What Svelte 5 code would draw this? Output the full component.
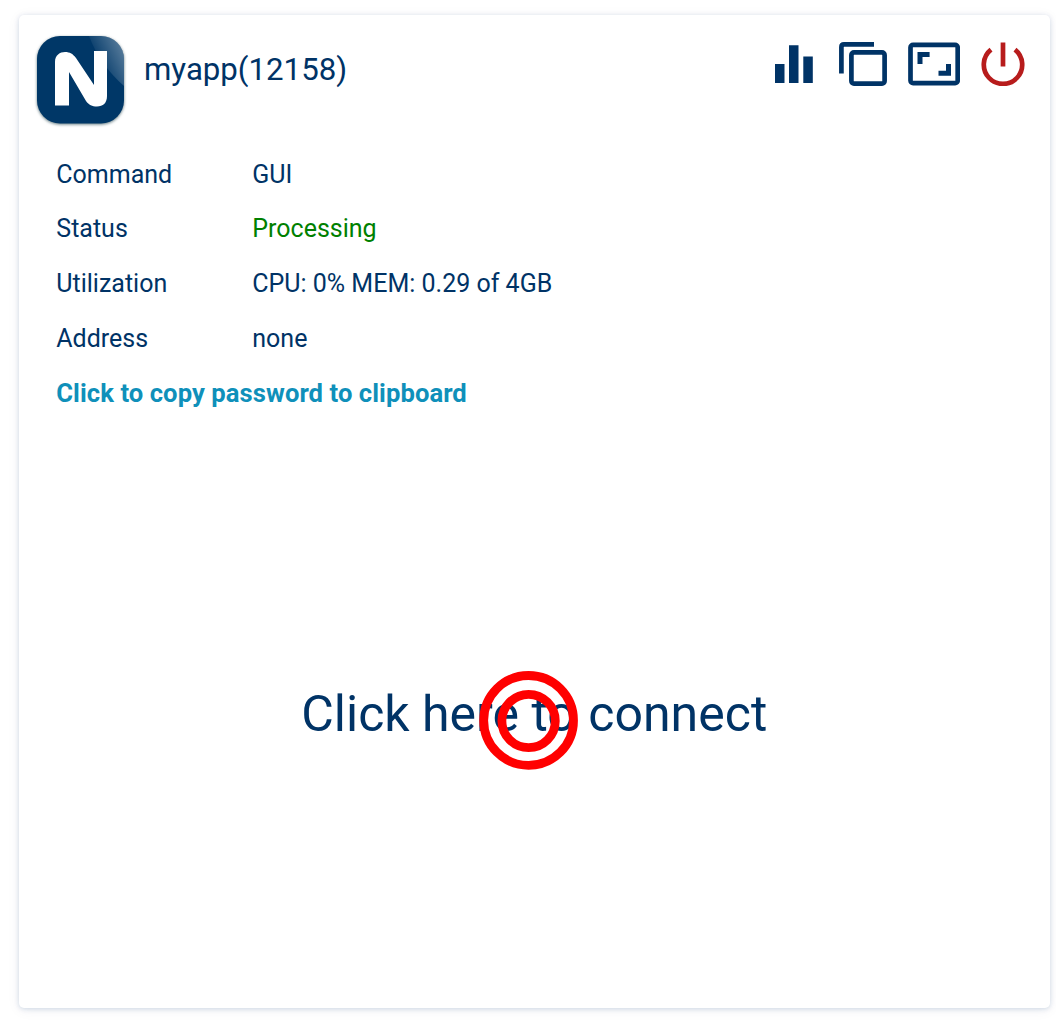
<script>
  const rows = [
    { label: 'Command', value: 'GUI' },
    { label: 'Status', value: 'Processing', ok: true },
    { label: 'Utilization', value: 'CPU: 0% MEM: 0.29 of 4GB' },
    { label: 'Address', value: 'none' }
  ];
</script>

<main class="page">
  <section class="card">
    <header>
      <svg class="logo" width="88" height="88" viewBox="0 0 88 88" aria-hidden="true">
        <defs>
          <linearGradient id="shine" x1="0.95" y1="0.1" x2="0.2" y2="0.6">
            <stop offset="0" stop-color="#fff" stop-opacity="0.36" />
            <stop offset="1" stop-color="#fff" stop-opacity="0" />
          </linearGradient>
          <clipPath id="tile"><rect width="87" height="87.5" rx="23" /></clipPath>
        </defs>
        <rect width="87" height="87.5" rx="23" fill="#003767" />
        <path clip-path="url(#tile)" d="M52 0Q63 29 87 50V0Z" fill="url(#shine)" />
        <path d="M18 69.500V26C18 19 23 16 28 16C33 16 36 18 39 22L57 49V15H70V60C70 67 66 70.500 60 70.500C55 70.500 52 69 49 65L32 36V69.500Z" fill="#fff" />
      </svg>
      <h1>myapp(12158)</h1>
      <nav>
        <svg width="38" height="44" viewBox="0 0 38 44" fill="#036"><path d="M0 22h9.500v19H0zM14 3.200h9.500V41H14zM28.300 14.500h9.500V41h-9.500z" /></svg>
        <svg class="copy" width="48" height="44" viewBox="0 0 48 44" fill="none" stroke="#036" stroke-width="4.700">
          <path d="M2.400 31.500V5Q2.400 2.400 5 2.400H35" />
          <rect x="12.400" y="10.400" width="33.200" height="31.200" rx="2.600" />
        </svg>
        <svg class="aspect" width="52" height="44" viewBox="0 0 52 44" fill="none" stroke="#036" stroke-width="4.700">
          <rect x="2.500" y="2.900" width="47.200" height="38.200" rx="2.600" />
          <path d="M12 22V12.400H21.600M30.500 31.200H40.500V22" stroke-width="5" />
        </svg>
        <svg class="power" width="44" height="44" viewBox="0 0 44 44" fill="none" stroke="#b71c1c" stroke-width="4.700">
          <path d="M22 .5V24.500M10 7.700A19.200 19.200 0 1 0 34 7.700" />
        </svg>
      </nav>
    </header>
    <dl>
      {#each rows as row}
        <div class="row">
          <dt>{row.label}</dt>
          <dd class:ok={row.ok}>{row.value}</dd>
        </div>
      {/each}
    </dl>
    <button class="copy-password">Click to copy password to clipboard</button>
    <button class="connect">
      <span>Click here to connect</span>
      <svg class="target" width="100" height="100" viewBox="0 0 100 100" fill="none" stroke="#f00" stroke-width="8.800">
        <circle cx="49.600" cy="49.400" r="44.900" /><circle cx="49.600" cy="50" r="26.700" />
      </svg>
    </button>
  </section>
</main>

<style>
  :global(body) { background: #fff; }
  .page {
    box-sizing: border-box;
    width: 1056px;
    height: 1025px;
    padding: 15px 6px 17px 18.500px;
    overflow: hidden;
    font-family: Roboto, "Liberation Sans", sans-serif;
    color: #036;
  }
  .card {
    box-sizing: border-box;
    display: flex;
    flex-direction: column;
    height: 993px;
    border-radius: 5px;
    background: #fff;
    box-shadow: 0 1px 5px rgba(0, 51, 120, 0.17), 0 2px 14px rgba(0, 51, 102, 0.06);
  }
  header {
    display: flex;
    align-items: flex-start;
    height: 131.700px;
    padding: 20.500px 25.400px 0 18.500px;
    box-sizing: border-box;
  }
  .logo { overflow: visible; filter: drop-shadow(0.500px 1px 1.500px rgba(0, 40, 50, 0.6)); }
  h1 {
    margin: 15px 0 0 19px;
    font-size: 31.200px;
    line-height: 38px;
    font-weight: 400;
  }
  nav { display: flex; margin: 6px 0 0 auto; }
  nav svg { display: block; }
  .copy { margin-left: 26px; }
  .aspect { margin-left: 21px; }
  .power { margin-left: 21px; }
  dl { margin: 0 0 0 37.800px; }
  .row { display: flex; align-items: center; height: 54.750px; font-size: 25px; }
  dt { width: 196px; }
  dd { margin: 0; }
  .ok { color: #008000; }
  button {
    padding: 0;
    border: 0;
    background: none;
    font-family: inherit;
    color: inherit;
    text-align: left;
  }
  .copy-password {
    align-self: flex-start;
    height: 54px;
    margin-left: 37.800px;
    font-size: 25.600px;
    font-weight: 700;
    letter-spacing: 0.070px;
    color: #0f90ba;
  }
  .connect {
    position: relative;
    flex: 1;
    display: flex;
    justify-content: center;
    padding-top: 264.300px;
    font-size: 50px;
    line-height: 60px;
  }
  .target { position: absolute; left: 460px; top: 251.300px; }
</style>
